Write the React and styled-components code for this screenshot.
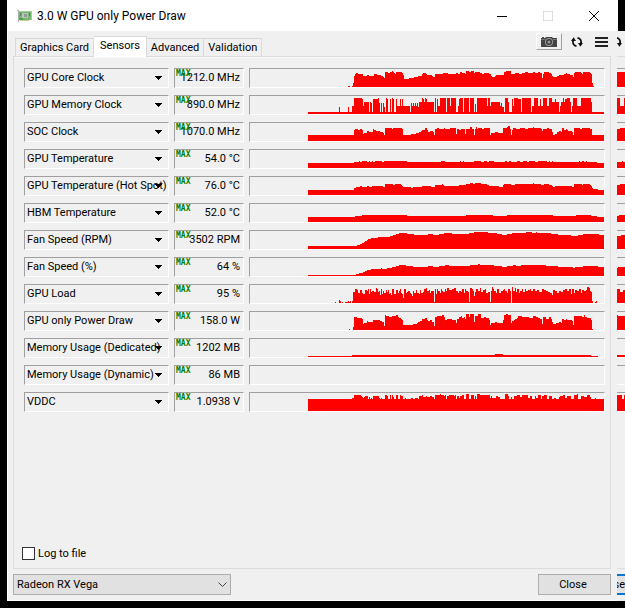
import React, { useState } from 'react';
import styled, { createGlobalStyle, css } from 'styled-components';

const GlobalStyle = createGlobalStyle`
  * {
    box-sizing: border-box;
  }

  body {
    margin: 0;
    background: #000;
    color: #000;
    font-family: Roboto, 'Liberation Sans', sans-serif;
    font-size: 11px;
    overflow: hidden;
  }

  button, select, input {
    font: inherit;
    color: inherit;
  }
`;

const Desktop = styled.div`
  display: flex;
  min-height: 100vh;
  padding: 0 0 7px 7px;
`;

const Window = styled.main`
  flex: 1;
  min-width: 0;
  display: flex;
  flex-direction: column;
  background: #f0f0f0;
`;

const TitleBar = styled.header`
  display: flex;
  align-items: center;
  height: 31px;
  padding-left: 9px;
  gap: 4px;
  background: #fff;
`;

const Title = styled.h1`
  flex: 1;
  margin: 0;
  font-size: 12px;
  font-weight: 400;
  white-space: nowrap;
`;

const WindowButtons = styled.div`
  display: flex;
  align-self: stretch;
`;

const CaptionButton = styled.button`
  width: 46px;
  padding: 0;
  border: none;
  background: transparent;
  display: flex;
  align-items: center;
  justify-content: center;
`;

const Client = styled.div`
  flex: 1;
  display: flex;
  flex-direction: column;
  padding: 0 6px 5px 5px;
  border-left: 1px solid #fff;
  border-bottom: 1px solid #fff;
`;

const TopRow = styled.div`
  display: flex;
  justify-content: space-between;
  height: 25px;
  padding-left: 2px;
`;

const Tabs = styled.div`
  display: flex;
  align-items: flex-end;
`;

const Tab = styled.button`
  height: 18px;
  padding: 0 4px;
  border: 1px solid #d9d9d9;
  border-bottom: none;
  border-left-width: ${props => (props.$first ? '1px' : '0')};
  background: #f0f0f0;
  line-height: 18px;
  white-space: nowrap;

  ${props => props.$active && css`
    height: 21px;
    margin-bottom: -1px;
    padding: 0 6px 2px;
    border-left-width: 0;
    background: #fff;
    z-index: 1;
  `}
`;

const Tools = styled.div`
  display: flex;
  align-items: flex-start;
  gap: 6px;
  padding: 2px 1px 0 0;
`;

const ToolButton = styled.button`
  display: flex;
  align-items: center;
  justify-content: center;
  width: ${props => (props.$raised ? '26px' : '18px')};
  height: 17px;
  padding: 0;
  border: 1px solid transparent;
  border-color: ${props => (props.$raised ? '#fff #a0a0a0 #a0a0a0 #fff' : 'transparent')};
  background: transparent;
`;

const Panel = styled.section`
  flex: 1;
  display: flex;
  flex-direction: column;
  justify-content: space-between;
  padding: 10px 5px 8px 10px;
  border: 1px solid #dcdcdc;
  box-shadow: inset 0 1px #fafafa;
`;

const SensorList = styled.ul`
  display: flex;
  flex-direction: column;
  gap: 7px;
  margin: 0;
  padding: 1px 0 0;
  list-style: none;
`;

const SensorRow = styled.li`
  display: grid;
  grid-template-columns: 145px 70px 1fr;
  column-gap: 5px;
  height: 20px;
`;

const sunken = css`
  border: 1px solid;
  border-color: #a0a0a0 #fff #fff #a0a0a0;
`;

const SensorPicker = styled.div`
  ${sunken}
  position: relative;
  min-width: 0;
`;

const SensorSelect = styled.select`
  appearance: none;
  display: block;
  width: 100%;
  height: 18px;
  padding: 0 0 0 2px;
  border: none;
  background: transparent;
  line-height: 18px;
`;

const PickerArrow = styled.svg`
  position: absolute;
  top: 7px;
  right: 6px;
  pointer-events: none;
`;

const Reading = styled.output`
  ${sunken}
  position: relative;
  padding-right: 3px;
  text-align: right;
  line-height: 18px;
  white-space: nowrap;
`;

const MaxBadge = styled.span`
  position: absolute;
  top: 1px;
  left: 1px;
  color: #008000;
  font-family: 'DejaVu Sans Mono', monospace;
  font-size: 8px;
  font-weight: 700;
  line-height: 7px;
`;

const PlotFrame = styled.div`
  ${sunken}
  border-left-width: ${props => (props.$cut ? '0' : '1px')};
  border-right-width: ${props => (props.$cut ? '0' : '1px')};
  height: 20px;
  min-width: 0;
`;

const PlotSvg = styled.svg`
  display: block;
  width: 100%;
  height: 18px;
`;

const LogLabel = styled.label`
  display: flex;
  align-items: center;
  align-self: flex-start;
  gap: 3px;
  margin-left: -2px;
`;

const LogBox = styled.input`
  appearance: none;
  width: 13px;
  height: 13px;
  margin: 0;
  border: 1px solid #333;
  background: #fff;

  &:checked {
    box-shadow: inset 0 0 0 2px #fff;
    background: #333;
  }
`;

const Footer = styled.footer`
  display: flex;
  justify-content: space-between;
  align-items: flex-end;
  padding-top: 5px;
`;

const DevicePicker = styled.div`
  position: relative;
  width: 218px;
`;

const DeviceSelect = styled.select`
  appearance: none;
  display: block;
  width: 100%;
  height: 21px;
  padding: 0 3px;
  border: 1px solid #adadad;
  border-radius: 0;
  background: #e1e1e1;
`;

const DeviceArrow = styled.svg`
  position: absolute;
  top: 8px;
  right: 4px;
  pointer-events: none;
`;

const CloseButton = styled.button`
  width: 73px;
  height: 21px;
  padding: 0 3px 0 0;
  border: 1px solid #adadad;
  background: #e1e1e1;
`;

// visible edge of the second window
const Behind = styled.aside`
  flex: none;
  display: flex;
  flex-direction: column;
  width: 8px;
  overflow: hidden;
  background: #f0f0f0;
`;

const BehindTitle = styled.div`
  height: 31px;
  border-left: 1px solid #fff;
  background: #000;
`;

const BehindTools = styled.div`
  height: 25px;
  padding-top: 5px;
`;

const BehindPanel = styled.div`
  flex: 1;
  display: flex;
  flex-direction: column;
  gap: 7px;
  padding-top: 11px;
  border-top: 1px solid #dcdcdc;
  border-bottom: 1px solid #dcdcdc;
`;

const BehindFooter = styled.div`
  height: 32px;
  padding-top: 5px;
`;

const BehindButton = styled.button`
  display: flex;
  align-items: center;
  justify-content: flex-end;
  width: 8px;
  height: 21px;
  padding: 0;
  border: solid #0078d7;
  border-width: 2px 0;
  background: #e1e1e1;
`;

// each history is a list of "start:height" steps, ended by the plot's width
const sensors = [
  {
    name: 'GPU Core Clock',
    value: '1212.0 MHz',
    history: '98:1 100:0 102:1 103:4 104:11 105:13 106:14 108:13 113:11 117:12 119:11 124:13 127:12 131:11 133:10 134:9 135:15 138:14 140:15 142:16 143:15 144:14 145:13 146:15 152:14 153:12 154:8 159:9 164:10 168:11 172:13 173:14 176:13 177:12 182:11 183:10 185:13 193:14 198:13 206:14 208:13 210:15 212:14 215:13 216:16 219:15 221:16 224:14 225:15 230:14 232:13 234:14 239:13 241:11 242:10 245:11 246:12 254:15 256:16 261:13 265:14 269:13 272:14 275:15 278:14 283:15 285:14 288:15 290:14 292:9 293:13 294:15 299:14 301:13 302:11 303:10 307:11 309:12 314:13 316:14 317:13 320:12 323:10 324:14 325:15 331:14 332:13 333:15 340:14 341:13 342:4 343:1 344:0',
    tail: '0:15',
  },
  {
    name: 'GPU Memory Clock',
    value: '890.0 MHz',
    history: '58:2 89:7 90:2 98:7 99:2 102:8 104:16 112:15 113:8 114:12 119:2 120:12 121:11 122:2 123:15 128:16 129:11 130:2 131:11 132:2 133:11 134:7 135:2 136:16 137:15 138:2 140:15 141:2 142:16 143:15 144:2 146:15 147:8 150:15 151:8 152:15 153:8 160:2 161:11 162:8 163:11 164:8 165:11 166:8 167:11 168:7 169:12 172:16 173:15 174:12 175:16 176:15 177:12 184:2 185:16 186:2 187:15 188:8 190:16 196:2 197:16 200:8 201:16 206:2 208:8 209:15 210:16 213:2 214:16 219:2 220:16 224:2 225:10 226:2 227:16 237:8 238:16 240:8 241:12 250:8 251:11 252:7 254:2 255:16 258:12 259:2 262:15 263:8 264:16 268:15 271:2 272:16 281:2 282:8 284:16 288:8 290:15 291:8 293:16 297:8 299:16 302:12 305:15 306:12 309:2 310:8 311:12 313:16 314:12 315:15 317:16 320:12 321:2 322:8 323:16 327:8 331:16 341:12 342:2',
    tail: '0:16 3:8 7:16',
  },
  {
    name: 'SOC Clock',
    value: '1070.0 MHz',
    history: '58:6 104:11 105:12 108:11 110:12 112:11 113:7 114:8 117:10 119:9 123:12 124:11 126:10 130:9 133:8 134:6 135:13 142:12 143:13 152:12 153:6 161:7 166:8 169:9 171:10 172:11 175:13 177:11 178:9 180:10 183:9 184:6 185:12 187:13 189:12 194:13 195:12 200:13 206:7 207:12 209:11 211:12 215:7 216:12 220:14 222:12 224:6 225:12 226:14 227:12 228:13 232:12 234:13 240:6 241:8 245:9 248:8 253:13 257:14 258:15 260:12 261:6 262:11 263:13 266:12 270:13 275:12 278:13 283:14 284:13 291:12 292:10 293:12 297:13 299:12 302:9 303:6 305:7 307:9 309:10 311:9 312:13 314:11 316:12 317:11 318:10 322:9 323:6 324:13 330:12 332:13 340:12 342:6',
    tail: '0:12 3:13',
  },
  {
    name: 'GPU Temperature',
    value: '54.0 °C',
    history: '58:5 104:6 109:7 110:6 112:7 117:6 119:7 120:6 122:7 123:6 125:7 132:6 134:7 157:6 191:7 195:6 210:7 211:6 213:7 214:6 224:7 231:6 234:7 237:6 239:7 244:6 255:7 257:6 259:7 261:6 267:7 270:6 273:7 277:6 279:7 285:6 288:7 297:6 299:7 300:6 302:7 303:6 329:7 330:6 332:7 334:6 336:7 337:6 347:5',
    tail: '0:6 5:7 6:6',
  },
  {
    name: 'GPU Temperature (Hot Spot)',
    value: '76.0 °C',
    history: '58:5 104:7 106:8 110:9 112:8 117:9 119:8 122:9 133:8 135:11 143:10 145:11 151:10 152:9 153:8 161:7 163:8 172:9 181:8 185:10 192:11 193:10 194:9 209:10 216:11 220:12 223:11 225:12 231:11 237:10 239:9 249:8 253:10 254:11 261:10 265:11 283:12 284:11 291:10 294:11 299:10 302:9 303:8 305:9 322:8 324:11 330:11 332:10 333:11 340:10 341:9 342:7 343:6 348:5',
    tail: '0:10 3:11',
  },
  {
    name: 'HBM Temperature',
    value: '52.0 °C',
    history: '58:5 105:6 112:7 157:6 216:7 243:6 257:7 303:6 326:7 341:6 347:5',
    tail: '0:6 2:7',
  },
  {
    name: 'Fan Speed (RPM)',
    value: '3502 RPM',
    history: '58:3 107:4 110:5 112:6 114:7 115:8 117:9 118:10 121:11 128:12 140:13 143:14 146:15 149:16 157:15 164:14 178:15 183:14 189:15 194:16 202:15 219:16 224:17 238:16 247:15 252:14 257:15 262:16 276:17 282:16 286:17 287:16 301:15 308:14 321:13 328:14 333:15 349:14',
    tail: '0:13 4:14',
  },
  {
    name: 'Fan Speed (%)',
    value: '64 %',
    history: '58:1 106:2 109:3 113:4 115:5 117:6 121:7 131:8 132:7 137:8 142:9 146:10 149:11 156:10 163:9 178:10 183:9 189:10 195:11 199:10 220:11 228:12 230:11 244:10 252:9 257:10 263:11 266:10 271:11 296:10 308:9 323:8 325:9 333:10 348:9',
    tail: '0:8 1:9',
  },
  {
    name: 'GPU Load',
    value: '95 %',
    history: '85:1 86:0 89:3 90:2 91:0 92:1 93:0 95:1 98:2 99:1 100:2 101:0 102:2 103:11 105:14 107:13 108:10 110:13 112:10 113:9 115:13 117:12 118:14 119:9 120:14 121:11 122:12 124:11 126:15 127:14 128:11 129:12 130:8 131:14 132:9 133:12 134:10 136:13 137:11 138:13 139:9 140:10 141:8 142:14 144:9 146:13 148:10 149:12 150:14 151:10 152:9 153:5 154:14 156:10 157:11 158:12 160:10 161:9 162:7 163:12 164:10 166:13 167:10 169:9 170:13 171:10 173:11 174:14 176:15 177:12 179:13 180:10 181:12 184:1 185:14 186:9 187:14 188:12 190:10 191:14 192:12 193:11 195:14 196:12 197:15 199:13 202:14 204:15 206:12 208:10 209:12 211:11 212:14 214:10 215:14 216:12 218:11 219:1 220:15 222:14 223:12 224:7 225:11 226:14 228:12 230:15 231:11 233:13 235:14 236:10 238:11 240:1 241:12 242:16 243:14 244:12 246:10 247:14 249:10 251:12 253:13 254:14 255:12 257:10 258:14 260:12 261:0 262:16 263:12 265:15 266:11 267:14 269:10 270:12 272:14 273:11 275:14 276:12 278:13 280:14 281:12 283:14 285:12 287:13 289:11 292:14 294:13 296:12 298:11 300:10 302:8 303:13 305:12 307:10 309:12 311:11 313:13 315:14 317:12 319:14 321:9 322:14 324:10 325:13 327:12 329:14 331:10 332:13 334:12 336:13 337:16 339:15 340:12 341:11 342:2 343:0 345:1 346:2 347:0',
    tail: '0:14 3:11 6:13',
  },
  {
    name: 'GPU only Power Draw',
    value: '158.0 W',
    history: '99:1 100:0 103:3 104:13 107:12 112:11 113:6 114:7 117:9 118:8 123:10 130:9 132:8 134:4 135:15 136:14 139:13 142:14 146:15 148:13 149:12 151:11 152:10 153:5 163:6 167:7 168:8 170:9 172:11 175:12 177:10 178:9 180:10 182:8 184:4 185:13 187:14 192:15 194:13 195:10 197:11 202:10 206:7 207:11 209:13 211:14 212:12 214:13 215:11 216:16 219:13 220:16 224:8 225:14 228:16 231:12 234:13 236:12 239:10 240:5 241:7 245:8 247:7 253:10 254:15 256:16 258:15 261:7 262:9 264:10 265:11 267:12 268:14 272:13 279:12 283:14 286:13 288:12 290:11 292:6 293:13 296:11 299:13 301:11 302:8 303:6 306:7 309:8 311:7 312:11 314:10 316:11 317:10 322:9 323:5 324:14 332:13 334:15 335:13 337:12 341:10 342:1 343:0',
    tail: '0:15 1:14',
  },
  {
    name: 'Memory Usage (Dedicated)',
    value: '1202 MB',
    history: '58:1 102:2 245:3 253:2 341:1 348:0',
    tail: '0:2',
  },
  {
    name: 'Memory Usage (Dynamic)',
    value: '86 MB',
    history: '',
    tail: '',
  },
  {
    name: 'VDDC',
    value: '1.0938 V',
    history: '58:12 102:13 104:16 111:15 112:14 113:13 114:14 115:15 118:12 119:14 120:12 121:13 122:12 123:15 129:13 130:12 131:13 132:12 135:16 137:15 138:12 140:16 141:12 142:16 143:14 144:12 146:16 148:12 150:16 151:15 153:12 155:13 156:12 161:13 163:12 165:13 168:12 169:15 172:16 173:14 176:15 177:14 180:15 182:14 184:12 185:16 190:17 191:16 194:15 195:16 196:12 197:15 199:16 204:15 205:16 206:12 207:15 209:13 210:15 212:16 214:12 216:17 219:12 221:16 224:12 225:15 226:12 227:17 230:16 240:13 241:15 242:13 246:15 248:14 250:12 255:17 258:15 259:12 261:14 262:12 264:15 267:16 270:14 272:16 278:13 280:15 282:12 285:15 286:13 288:16 291:12 292:15 294:16 297:12 299:15 302:12 304:13 306:12 309:14 310:15 313:16 315:13 317:15 321:12 324:16 327:17 328:12 331:15 334:14 337:16 340:14 341:12 345:13 346:12',
    tail: '0:16 5:12 7:16',
  },
];

const stepPath = (steps, width) => {
  if (!steps) return '';
  const points = steps.split(' ').map(step => step.split(':').map(Number));
  return points.map(([x, h], i) => {
    const end = i + 1 < points.length ? points[i + 1][0] : width;
    return `M${x} 18V${18 - h}H${end}V18Z`;
  }).join('');
};

const Plot = ({ steps, width, label, cut }) => (
  <PlotFrame $cut={cut}>
    <PlotSvg viewBox={`0 0 ${width} 18`} preserveAspectRatio="none" shapeRendering="crispEdges" role="img" aria-label={label}>
      <path d={stepPath(steps, width)} fill="#f00" />
    </PlotSvg>
  </PlotFrame>
);

const CardIcon = () => (
  <svg width="17" height="16" viewBox="0 0 17 16" aria-hidden="true">
    <path d="M1 2h2v12H2V3H1z" fill="#a9b0aa" />
    <path d="M3 3h13v9H3z" fill="#74b56f" />
    <path d="M3 3h13v1H3zM15 4h1v8h-1z" fill="#9fd09b" />
    <path d="M4 12h9v1H4z" fill="#cfc68a" />
    <path d="M3 10h4v2H3z" fill="#4fa456" />
    <rect x="6" y="5" width="6" height="5" fill="#b9c6ba" />
    <rect x="8" y="6" width="3" height="3" fill="#8d9c8f" />
    <path d="M13 5h1v3h-1zM4 5h1v3H4z" fill="#4c8c58" />
    <path d="M5 6h1v1H5z" fill="#c46a4a" />
  </svg>
);

const CameraIcon = () => (
  <svg width="16" height="12" viewBox="0 0 16 12" aria-hidden="true">
    <path d="M0 2h4l1-1h6l1 1h4v9H0z" fill="#444" />
    <path d="M1 1h2v1H1z" fill="#555" />
    <path d="M0 3h4v1H0zM12 3h4v1h-4z" fill="#777" />
    <circle cx="8" cy="6" r="4" fill="#999" />
    <circle cx="8" cy="6" r="3" fill="#3c3c3c" />
    <circle cx="8" cy="6" r="1.5" fill="#999" />
  </svg>
);

const RefreshIcon = () => (
  <svg width="12" height="12" viewBox="0 0 12 12" aria-hidden="true">
    <path d="M5.5 10.2A4.2 4.2 0 0 1 2.2 4.4M6.5 1.8a4.2 4.2 0 0 1 3.3 5.8" fill="none" stroke="#111" strokeWidth="1.8" />
    <path d="M0 5L2.6 1.2 5 5zM12 7L9.4 10.8 7 7z" fill="#111" />
  </svg>
);

const MenuIcon = () => (
  <svg width="13" height="11" viewBox="0 0 13 11" shapeRendering="crispEdges" aria-hidden="true">
    <path d="M0 1h13v2H0zM0 5h13v2H0zM0 9h13v2H0z" fill="#222" />
  </svg>
);

const tabs = ['Graphics Card', 'Sensors', 'Advanced', 'Validation'];

const App = () => {
  const [activeTab, setActiveTab] = useState('Sensors');
  const [logging, setLogging] = useState(false);

  return (
    <>
      <GlobalStyle />
      <Desktop>
        <Window>
          <TitleBar>
            <CardIcon />
            <Title>3.0 W GPU only Power Draw</Title>
            <WindowButtons>
              <CaptionButton aria-label="Minimize">
                <svg width="10" height="10" shapeRendering="crispEdges"><path d="M0 5h10v1H0z" /></svg>
              </CaptionButton>
              <CaptionButton aria-label="Maximize" disabled>
                <svg width="10" height="10" shapeRendering="crispEdges"><path d="M.5.5h9v9h-9z" fill="none" stroke="#ddd" /></svg>
              </CaptionButton>
              <CaptionButton aria-label="Close window">
                <svg width="10" height="10"><path d="M0 0l10 10M10 0L0 10" stroke="#000" /></svg>
              </CaptionButton>
            </WindowButtons>
          </TitleBar>

          <Client>
            <TopRow>
              <Tabs role="tablist">
                {tabs.map((tab, i) => (
                  <Tab
                    key={tab}
                    role="tab"
                    aria-selected={activeTab === tab}
                    $active={activeTab === tab}
                    $first={i === 0}
                    onClick={() => setActiveTab(tab)}
                  >
                    {tab}
                  </Tab>
                ))}
              </Tabs>
              <Tools>
                <ToolButton $raised aria-label="Screenshot"><CameraIcon /></ToolButton>
                <ToolButton aria-label="Refresh"><RefreshIcon /></ToolButton>
                <ToolButton aria-label="Menu"><MenuIcon /></ToolButton>
              </Tools>
            </TopRow>

            <Panel>
              <SensorList>
                {sensors.map(sensor => (
                  <SensorRow key={sensor.name}>
                    <SensorPicker>
                      <SensorSelect aria-label={sensor.name}>
                        <option>{sensor.name}</option>
                      </SensorSelect>
                      <PickerArrow width="7" height="4" viewBox="0 0 7 4" shapeRendering="crispEdges" aria-hidden="true">
                        <path d="M0 0h7v1H6v1H5v1H4v1H3V3H2V2H1V1H0z" />
                      </PickerArrow>
                    </SensorPicker>
                    <Reading>
                      <MaxBadge>MAX</MaxBadge>
                      {sensor.value}
                    </Reading>
                    <Plot steps={sensor.history} width={354} label={`${sensor.name} history`} />
                  </SensorRow>
                ))}
              </SensorList>
              <LogLabel>
                <LogBox type="checkbox" checked={logging} onChange={e => setLogging(e.target.checked)} />
                Log to file
              </LogLabel>
            </Panel>

            <Footer>
              <DevicePicker>
                <DeviceSelect aria-label="Graphics device">
                  <option>Radeon RX Vega</option>
                </DeviceSelect>
                <DeviceArrow width="9" height="6" viewBox="0 0 9 6" aria-hidden="true">
                  <path d="M.5 .5l4 4 4-4" fill="none" stroke="#444" />
                </DeviceArrow>
              </DevicePicker>
              <CloseButton>Close</CloseButton>
            </Footer>
          </Client>
        </Window>

        <Behind>
          <BehindTitle />
          <BehindTools>
            <svg width="5" height="12" viewBox="7 0 5 12" aria-hidden="true">
              <path d="M6.5 1.8a4.2 4.2 0 0 1 3.3 5.8" fill="none" stroke="#111" strokeWidth="1.8" />
              <path d="M12 7L9.4 10.8 7 7z" fill="#111" />
            </svg>
          </BehindTools>
          <BehindPanel>
            {sensors.map(sensor => (
              <Plot key={sensor.name} cut steps={sensor.tail} width={8} label={`${sensor.name}, second window`} />
            ))}
          </BehindPanel>
          <BehindFooter>
            <BehindButton>se</BehindButton>
          </BehindFooter>
        </Behind>
      </Desktop>
    </>
  );
};

export default App;
